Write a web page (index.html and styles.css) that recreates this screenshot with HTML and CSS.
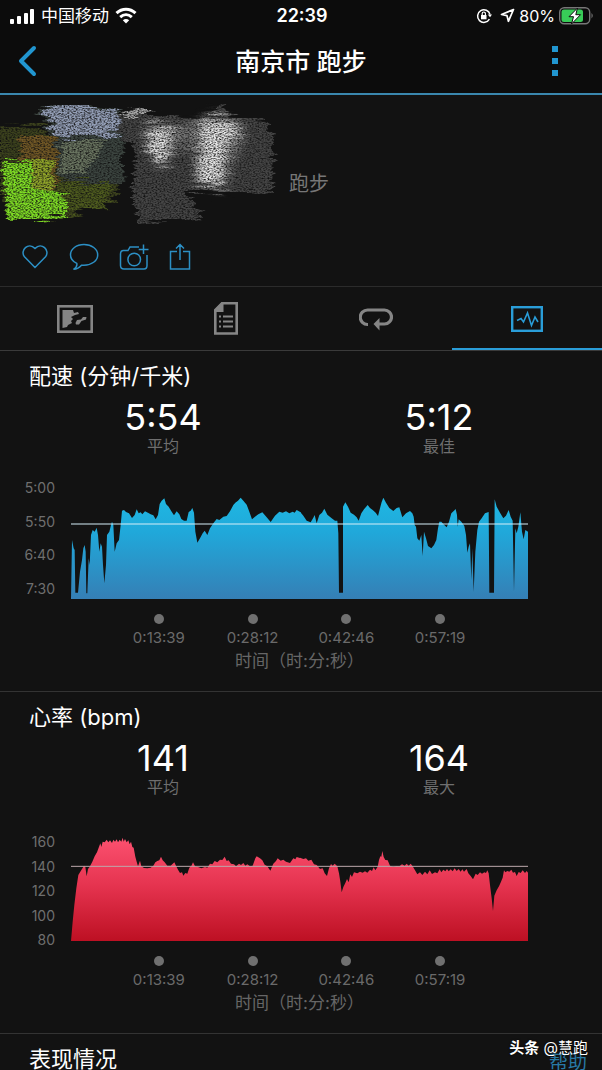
FILE: index.html
```html
<!DOCTYPE html>
<html lang="zh-CN">
<head>
<meta charset="utf-8">
<meta name="viewport" content="width=device-width, initial-scale=1">
<title>南京市 跑步</title>
<link rel="stylesheet" href="styles.css">
</head>
<body>
<div class="app">
  <div class="status">
    <div class="status-side">
      <svg class="signal" width="25" height="16" viewBox="0 0 25 16" fill="#fff"><rect x="0" y="11" width="4" height="5" rx="1"/><rect x="7" y="8" width="4" height="8" rx="1"/><rect x="14" y="5" width="4" height="11" rx="1"/><rect x="20" y="1" width="4" height="15" rx="1"/></svg>
      <span class="carrier">中国移动</span>
      <svg width="22" height="17" viewBox="0 0 22 17" fill="none" stroke="#fff" stroke-width="3"><path d="M1.500 6.200C7 .9 15 .9 20.500 6.200"/><path d="M5.200 10.200C8.700 7 13.300 7 16.800 10.200"/><path d="M11 16.500L7.800 13.200Q11 10.600 14.200 13.200Z" fill="#fff" stroke="none"/></svg>
    </div>
    <span class="clock">22:39</span>
    <div class="status-side status-right">
      <svg width="16" height="16" viewBox="0 0 16 16" fill="none" stroke="#fff" stroke-width="1.500"><path d="M13.400 11.200A6.300 6.300 0 1 1 14 6.500"/><path d="M11.800 6.500H16L14 9.300Z" fill="#fff" stroke="none"/><rect x="5" y="7" width="5.500" height="4.300" fill="#fff" stroke="none"/><path d="M6.200 7.500V5.600a1.600 1.600 0 0 1 3.200 0V7.500" stroke-width="1.200"/></svg>
      <svg class="arrow" width="15" height="15" viewBox="0 0 15 15" fill="none" stroke="#fff" stroke-width="1.700" stroke-linejoin="round"><path d="M13.500 1.500L1.500 6.500L7 7.700L8.400 13.300Z"/></svg>
      <span class="percent">80%</span>
      <svg width="35" height="18" viewBox="0 0 35 18"><rect x=".7" y=".7" width="30" height="16" rx="4.500" fill="none" stroke="#777" stroke-width="1.400"/><rect x="2.500" y="2.500" width="21.500" height="12.400" rx="2.500" fill="#38cc58"/><path d="M32.500 6Q35 8.700 32.500 11.500Z" fill="#777"/><path d="M18.500 1L10 9.700H14.500L12.500 17L21.500 7.700H16.800Z" fill="#fff" stroke="#0c0c0c" stroke-width="1"/></svg>
    </div>
  </div>

  <header class="header">
    <button class="icon-button" aria-label="返回"><svg width="20" height="32" viewBox="0 0 20 32" fill="none" stroke="#2196d0" stroke-width="4" stroke-linecap="round" stroke-linejoin="round"><path d="M16 3L3 16L16 29"/></svg></button>
    <h1 class="title">南京市 跑步</h1>
    <button class="icon-button more" aria-label="更多"><svg width="6" height="30" viewBox="0 0 6 30" fill="#2196d0"><path d="M0 0h6v6H0zM0 12h6v6H0zM0 24h6v6H0z"/></svg></button>
  </header>

  <section class="profile">
    <div class="identity">
      <svg class="scribble" width="280" height="128" viewBox="0 0 280 128">
        <defs>
          <filter id="chalk" x="-5%" y="-5%" width="110%" height="110%" color-interpolation-filters="sRGB">
            <feTurbulence type="fractalNoise" baseFrequency=".03 .3" numOctaves="2" seed="4" result="edge"/>
            <feDisplacementMap in="SourceGraphic" in2="edge" scale="18" xChannelSelector="R" yChannelSelector="G" result="shape"/>
            <feTurbulence type="fractalNoise" baseFrequency=".5 .8" numOctaves="3" seed="8" result="grain"/>
            <feColorMatrix in="grain" type="matrix" values="0 0 0 0 0  0 0 0 0 0  0 0 0 0 0  2 1 0 0 -.75" result="mask"/>
            <feComposite in="shape" in2="mask" operator="in" result="drawn"/>
            <feGaussianBlur in="drawn" stdDeviation=".4"/>
          </filter>
          <filter id="soft" x="-20%" y="-20%" width="140%" height="140%"><feGaussianBlur stdDeviation="5"/></filter>
        </defs>
        <g filter="url(#chalk)">
          <path d="M0 30L40 29L57 44L122 48L116 104L66 122L10 124L0 95Z" fill="#3c421d"/>
          <path d="M20 40H58V90H22Z" fill="#705725"/>
          <path d="M36 14L52 6L120 15L124 42L122 90L60 82L56 45Z" fill="#3c4540"/>
          <path d="M40 14L54 7L119 16L119 39L60 43Z" fill="#929db5"/>
          <path d="M62 46L108 44L82 78H60Z" fill="#68735f"/>
          <path d="M58 86L112 86L106 112L66 118Z" fill="#4d5a1e"/>
          <path d="M2 64H55L53 88L66 104V121L8 124Z" fill="#7edb24"/>
          <path d="M32 64H55V94L32 90Z" fill="#94952a" opacity=".8"/>
          <path d="M116 18L148 11L150 18L174 21L216 23L222 7L230 20L266 23L274 48L273 98L216 96L186 94L202 121L140 129L132 100L136 54L120 40Z" fill="#454545"/>
          <path d="M116 17L148 10V16L134 22Z" fill="#a5a5a5"/>
          <g filter="url(#soft)"><path d="M143 32L196 28L218 20L246 34L226 90L194 84L198 54L180 50L164 74L146 48Z" fill="#747474"/></g>
          <g filter="url(#soft)"><path d="M147 32H172L166 66H152ZM200 22L244 30L224 54L220 92L196 84L202 48Z" fill="#e6e6e6"/></g>
        </g>
      </svg>
      <span class="activity">跑步</span>
    </div>
    <div class="actions">
      <button class="icon-button" aria-label="喜欢"><svg width="28" height="28" viewBox="0 0 28 28"><path d="M14 24.500L3.500 13.800C-1.500 7.500 7.500-1.500 14 5.500C20.500-1.500 29.500 7.500 24.500 13.800Z"/></svg></button>
      <button class="icon-button" aria-label="评论"><svg width="30" height="28" viewBox="0 0 30 28"><path d="M4.500 26.300C7.500 24.500 8.300 22.700 7.800 20.400C3.700 18.300 1.500 15.300 1.500 11.900C1.500 6 7.300 1.500 15 1.500S28.700 6 28.700 11.900S22.500 22.200 15 22.200H12.500C10.500 24.500 8 26 4.500 26.300Z"/></svg></button>
      <button class="icon-button" aria-label="添加照片"><svg width="30" height="28" viewBox="0 0 30 28"><path d="M20 4H11L9 7.500H4.500Q1.500 7.500 1.500 11V22.500Q1.500 26 5 26H25Q28 26 28 22.500V12"/><circle cx="15.200" cy="16.500" r="6.300"/><path d="M24.500 1.500V11M19.700 6.400H29.500"/></svg></button>
      <button class="icon-button" aria-label="分享"><svg width="22" height="28" viewBox="0 0 22 28"><path d="M8 8.500H1.500V26H20.500V8.500H14M11 17V1.500M7 5.500L11 1.500L15 5.500"/></svg></button>
    </div>
  </section>

  <nav class="tabs">
    <button class="tab" aria-label="地图"><svg width="36" height="28" viewBox="0 0 36 28"><rect x="1.300" y="1.300" width="33.400" height="25.400" fill="none" stroke="#858585" stroke-width="2.600"/><path d="M5.500 5H16L17 8L21 7L22 9L18 10L14 12L16 14L14 16L15 18L11 20L10 22L5.500 23ZM18.500 18L20 15L24 14.500L26 12L29.500 12L29 14.500L24.500 16L22 19.500H19Z" fill="#858585"/></svg></button>
    <button class="tab" aria-label="详情"><svg width="24" height="33" viewBox="0 0 24 33"><path d="M8 1.300H22.700V31.500H1.300V8Z" fill="none" stroke="#858585" stroke-width="2.600"/><path d="M0 8.500L8 0H9.500V10H0Z" fill="#858585"/><path d="M5 13.500h2v2H5zm4 0h10v2H9zM5 18.500h2v2H5zm4 0h10v2H9zM5 23.500h2v2H5zm4 0h10v2H9z" fill="#858585"/></svg></button>
    <button class="tab" aria-label="计圈"><svg width="34" height="24" viewBox="0 0 34 24"><path d="M9 17.500H8.500A7 7 0 0 1 8.500 3H25.500A7 7 0 0 1 25.500 17H20" fill="none" stroke="#858585" stroke-width="3.200"/><path d="M14.500 17L20.500 11V23.500Z" fill="#858585"/></svg></button>
    <button class="tab tab-active" aria-label="图表"><svg width="32" height="26" viewBox="0 0 32 26" fill="none" stroke="#2a9dd8"><rect x="1.200" y="1.200" width="29.600" height="23.600" stroke-width="2.400"/><path d="M6 14.500L10 12.500L12.500 16L16.500 7L20.500 19.500L24 11L27 16" stroke-width="1.600"/></svg></button>
  </nav>

  <main>
    <section class="panel">
      <h2 class="heading">配速 (分钟/千米)</h2>
      <div class="metrics">
        <div class="metric"><strong class="value">5:54</strong><span class="caption">平均</span></div>
        <div class="metric"><strong class="value">5:12</strong><span class="caption">最佳</span></div>
      </div>
      <div class="chart">
        <div class="y-axis y-pace"><span>5:00</span><span>5:50</span><span>6:40</span><span>7:30</span></div>
        <svg class="plot plot-pace" viewBox="33 27 1371 330" preserveAspectRatio="none">
          <defs><linearGradient id="pace" gradientUnits="userSpaceOnUse" x1="0" y1="50" x2="0" y2="357"><stop offset="0" stop-color="#1fb8e2"/><stop offset=".35" stop-color="#20a8da"/><stop offset="1" stop-color="#357fb5"/></linearGradient></defs>
          <path fill="url(#pace)" d="M33 357L36 180 41 205 44 210 46 338 54 338 60 275 66 240 70 205 74 195 77 215 79 340 82 340 86 235 89 255 93 165 98 150 104 155 110 143 114 165 118 215 122 190 126 200 129 255 133 310 138 255 141 165 148 155 153 135 156 125 160 135 164 215 170 190 177 180 182 135 186 92 192 90 198 96 207 100 216 114 224 105 230 88 236 100 242 97 247 103 255 94 264 98 272 103 280 106 287 118 294 105 299 72 305 62 313 55 318 72 326 80 334 94 342 106 350 94 358 103 364 117 372 122 380 122 386 96 392 92 397 84 402 98 406 155 412 188 420 175 428 160 434 152 442 165 450 145 460 130 470 117 478 120 490 110 500 108 510 94 520 75 526 68 534 62 542 53 550 62 560 74 568 95 576 118 585 110 595 103 607 97 620 112 632 126 645 107 658 95 668 98 678 94 688 100 698 95 704 98 710 90 722 97V357Z"/>
          <path fill="url(#pace)" transform="translate(720 0)" d="M0 357V95L10 107 20 122 32 127 40 113 44 105 50 130 58 105 66 98 73 86 82 104 95 115 105 122 112 122 115 160 117 338 129 338 129 80 136 67 144 80 152 98 162 104 170 112 176 122 184 100 192 88 203 75 210 84 218 90 227 98 234 108 240 85 245 66 250 53 258 68 268 84 280 93 290 84 298 82 307 112 318 100 330 93 337 100 341 110 344 135 348 140 352 175 358 182 364 165 368 228 372 155 378 175 384 198 394 205 402 195 409 180 414 145 418 125 424 125 432 134 440 142 447 125 454 100 462 92 467 87 471 105 473 140 476 118 484 125 493 138 498 165 502 218 506 200 510 190 514 300 517 205 521 335 526 215 532 150 537 125 545 115 555 100 566 96 568 338 582 338 584 58 590 80 600 98 610 115 618 107 626 90 632 110 638 122 642 335 646 145 650 160 655 140 661 97 666 155 671 178 676 150 684 155V357Z"/>
          <path d="M33 132H1404" stroke="#d5eef8" stroke-width="3"/>
        </svg>
        <div class="x-axis"><span class="tick">0:13:39</span><span class="tick">0:28:12</span><span class="tick">0:42:46</span><span class="tick">0:57:19</span></div>
        <p class="x-label">时间（时:分:秒）</p>
      </div>
    </section>

    <section class="panel">
      <h2 class="heading">心率 (bpm)</h2>
      <div class="metrics">
        <div class="metric"><strong class="value">141</strong><span class="caption">平均</span></div>
        <div class="metric"><strong class="value">164</strong><span class="caption">最大</span></div>
      </div>
      <div class="chart chart-heart">
        <div class="y-axis y-heart"><span>160</span><span>140</span><span>120</span><span>100</span><span>80</span></div>
        <svg class="plot plot-heart" viewBox="33 27 1371 321" preserveAspectRatio="none">
          <defs><linearGradient id="heart" gradientUnits="userSpaceOnUse" x1="0" y1="40" x2="0" y2="348"><stop offset="0" stop-color="#fb506f"/><stop offset=".45" stop-color="#e63450"/><stop offset="1" stop-color="#bd1023"/></linearGradient></defs>
          <path fill="url(#heart)" d="M33 348L38 290 43 240 49 190 55 150 60 142 66 132 72 122 76 126 80 154 84 132 90 124 97 110 104 94 111 82 116 68 121 55 124 66 128 50 134 52 140 44 145 52 150 46 156 54 160 44 165 50 170 43 174 52 179 44 184 50 188 38 191 50 195 42 200 52 205 46 209 58 213 50 217 66 221 68 226 95 230 110 234 124 240 107 244 124 252 129 262 130 272 128 280 122 286 112 292 108 298 106 303 95 308 106 314 112 322 122 332 122 343 112 348 122 354 134 360 144 366 142 370 152 376 144 382 146 388 128 394 123 399 112 405 124 414 126 424 130 435 126 442 128 450 116 457 118 464 108 472 112 480 104 487 105 494 95 500 108 506 106 513 116 522 118 528 124 537 116 543 120 550 114 556 122 562 118 570 124 578 122 586 100 590 94 600 100 607 106 614 119 622 124 631 137 640 116 648 108 653 100 662 107 670 104 678 110 690 114 700 100 706 103 710 96 722 100V348Z"/>
          <path fill="url(#heart)" transform="translate(720 0)" d="M0 348V98L10 102 18 100 25 107 34 104 42 118 50 120 60 132 68 130 74 145 81 153 87 130 93 117 98 122 104 116 112 124 117 145 121 170 125 202 130 186 136 174 141 162 146 172 151 148 156 156 162 142 172 145 180 140 188 143 195 139 202 143 210 134 216 138 221 127 226 136 233 125 237 105 241 94 244 95 247 78 251 96 256 105 263 106 270 122 280 126 290 123 298 124 306 118 314 122 320 116 326 122 332 116 338 124 345 136 352 148 360 142 367 150 375 140 382 148 389 136 396 147 405 142 412 145 419 133 424 142 430 134 436 139 441 132 446 139 452 133 458 139 464 130 470 138 476 132 482 140 487 133 492 140 500 132 505 145 512 153 519 163 527 146 533 150 540 142 546 146 553 142 558 144 562 136 566 145 570 180 575 220 579 258 583 212 590 196 597 184 603 170 608 158 612 136 616 142 622 138 628 140 634 134 639 143 645 141 650 153 656 141 662 144 668 136 675 144 680 138 684 143V348Z"/>
          <path d="M33 124H1404" stroke="#bda9ad" stroke-width="3"/>
        </svg>
        <div class="x-axis"><span class="tick">0:13:39</span><span class="tick">0:28:12</span><span class="tick">0:42:46</span><span class="tick">0:57:19</span></div>
        <p class="x-label">时间（时:分:秒）</p>
      </div>
    </section>

    <section class="panel panel-summary">
      <h2 class="heading">表现情况</h2>
      <a class="help" href="#help">帮助</a>
    </section>
  </main>
  <div class="watermark"><b>头条</b> @慧跑</div>
</div>
</body>
</html>
```
FILE: styles.css
```css
* { box-sizing: border-box; }
body {
  margin: 0;
  background: #121212;
  color: #fff;
  font-family: Inter, "Noto Sans CJK SC", sans-serif;
}
svg { display: block; flex: none; }
.app { position: relative; height: 100vh; overflow: hidden; }

.status {
  display: grid;
  grid-template-columns: 1fr auto 1fr;
  align-items: center;
  height: 31px;
  padding: 0 8px 0 10px;
  background: #0c0c0c;
}
.status-side { display: flex; align-items: center; gap: 6px; }
.status-right { justify-content: flex-end; gap: 4px; }
.carrier { font-size: 17px; line-height: 24px; }
.clock { font-size: 18px; font-weight: 600; }
.arrow { margin-left: 4px; }
.percent { font-size: 16px; }

.header {
  position: relative;
  display: grid;
  grid-template-columns: 1fr auto 1fr;
  align-items: center;
  height: 64px;
  padding: 0 44px 2px 18px;
  background: #0c0c0c;
  border-bottom: 2px solid #3a87ae;
}
.title {
  position: absolute;
  left: 0;
  right: 0;
  margin: 0;
  text-align: center;
  pointer-events: none;
  font-size: 25px;
  font-weight: 500;
  line-height: 32px;
}
.icon-button { padding: 0; border: 0; background: none; justify-self: start; }
.more { grid-column: 3; justify-self: end; }

.profile { height: 192px; border-bottom: 1px solid #2b2b2b; }
.identity { display: flex; align-items: center; gap: 9px; }
.scribble { margin-top: 1px; }
.activity { padding-top: 48px; color: #777; font-size: 20px; line-height: 28px; }
.actions { display: flex; gap: 20px; padding: 19px 21px; }
.actions svg { fill: none; stroke: #2c8fc4; stroke-width: 1.5; }

.tabs {
  display: grid;
  grid-template-columns: repeat(4, 1fr);
  height: 64px;
  border-bottom: 1px solid #3a3a3a;
}
.tab {
  display: flex;
  align-items: center;
  justify-content: center;
  padding: 0;
  border: 0;
  background: none;
}
.tab-active { box-shadow: inset 0 -2px #2a9dd8; }

.panel { padding-top: 11px; border-bottom: 1px solid #333; }
.heading { margin: 0 0 0 29px; font-size: 22px; font-weight: 400; line-height: 28px; }
.metrics {
  display: grid;
  grid-template-columns: 1fr 1fr;
  padding: 9px 25px 0;
}
.metric { display: flex; flex-direction: column; align-items: center; }
.value { font-size: 36px; font-weight: 400; line-height: 36px; }
.caption { color: #6f6f6f; font-size: 16px; line-height: 22px; }

.chart {
  display: grid;
  grid-template-columns: 55px 1fr;
  column-gap: 16px;
  padding: 24px 74px 19px 0;
}
.chart-heart { padding-top: 36px; }
.y-axis {
  display: flex;
  flex-direction: column;
  justify-content: space-between;
  align-self: end;
  color: #6f6f6f;
  font-size: 14px;
  line-height: 14px;
  text-align: right;
}
.y-pace { height: 115px; margin-bottom: 3px; }
.y-heart { height: 112px; margin-bottom: -6px; }
.plot { width: 100%; align-self: end; }
.plot-pace { height: 110px; }
.plot-heart { height: 107px; }
.x-axis {
  grid-column: 2;
  display: grid;
  grid-template-columns: repeat(4, 1fr);
  padding: 15px 41px 0;
}
.tick {
  display: flex;
  flex-direction: column;
  align-items: center;
  gap: 6px;
  color: #6a6a6a;
  font-size: 15px;
  line-height: 16px;
}
.tick::before {
  content: "";
  width: 10px;
  height: 10px;
  border-radius: 50%;
  background: #707070;
}
.x-label {
  grid-column: 2;
  margin: 4px 0 0;
  color: #666;
  font-size: 17px;
  line-height: 22px;
  text-align: center;
}
.panel-summary { display: flex; justify-content: space-between; padding-right: 15px; }
.help { padding-top: 4px; color: #2878a5; font-size: 19px; line-height: 28px; text-decoration: none; }
.watermark {
  position: absolute;
  right: 14px;
  bottom: 10px;
  font-size: 15px;
  line-height: 24px;
  text-shadow: 0 0 2px #000;
}
```
